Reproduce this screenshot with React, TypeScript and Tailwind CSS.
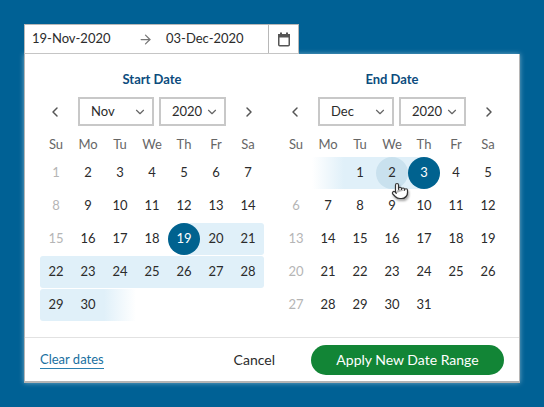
import { ArrowRight, ChevronDown, ChevronLeft, ChevronRight, Pointer } from "lucide-react";

const weekDays = ["Su", "Mo", "Tu", "We", "Th", "Fr", "Sa"];

type Cell = { day?: number; muted?: boolean; bg?: string; selected?: boolean; hover?: boolean; cursor?: boolean };

const band = "bg-[#e0f0f9]";

const range = (from: number, to: number): Cell[] => {
  const out: Cell[] = [];
  for (let d = from; d <= to; d++) out.push({ day: d });
  return out;
};

const startRows: Cell[][] = [
  [{ day: 1, muted: true }, ...range(2, 7)],
  [{ day: 8, muted: true }, ...range(9, 14)],
  [
    { day: 15, muted: true },
    ...range(16, 18),
    { day: 19, selected: true, bg: "bg-gradient-to-r from-transparent from-50% to-[#e0f0f9] to-50%" },
    { day: 20, bg: band },
    { day: 21, bg: `${band} rounded-r-[3px]` },
  ],
  range(22, 28).map((c, i) => ({
    ...c,
    bg: i === 0 ? `${band} rounded-l-[3px]` : i === 6 ? `${band} rounded-r-[3px]` : band,
  })),
  [
    { day: 29, bg: `${band} rounded-l-[3px]` },
    { day: 30, bg: band },
    { bg: "bg-gradient-to-r from-[#e0f0f9] to-white" },
  ],
];

const endRows: Cell[][] = [
  [
    {},
    { bg: "bg-gradient-to-r from-white to-[#e0f0f9]" },
    { day: 1, bg: band },
    { day: 2, bg: band, hover: true, cursor: true },
    { day: 3, selected: true, bg: "bg-gradient-to-r from-[#e0f0f9] from-50% to-transparent to-50%" },
    { day: 4 },
    { day: 5 },
  ],
  [{ day: 6, muted: true }, ...range(7, 12)],
  [{ day: 13, muted: true }, ...range(14, 19)],
  [{ day: 20, muted: true }, ...range(21, 26)],
  [{ day: 27, muted: true }, ...range(28, 31)],
];

function Day({ cell }: { cell: Cell }) {
  const text = cell.selected ? "text-white" : cell.muted ? "text-[#b5b5b5]" : "text-[#2b2b2b]";
  const circle = cell.selected ? "bg-[#00628f] rounded-full" : cell.hover ? "bg-[#c9e1ee] rounded-full" : "";
  return (
    <div className={`relative h-8 w-8 ${cell.bg ?? ""}`}>
      <div className={`flex h-8 w-8 items-center justify-center text-[13px] ${circle} ${text}`}>{cell.day}</div>
      {cell.cursor && (
        <Pointer
          size={18}
          strokeWidth={1.6}
          className="absolute left-[15px] top-[25px] z-10 fill-white text-[#333333] drop-shadow-[1px_2px_1px_rgba(0,0,0,0.35)]"
        />
      )}
    </div>
  );
}

function Select({ value, width }: { value: string; width: string }) {
  return (
    <div className={`flex h-[29px] items-center justify-between border-2 border-[#c8c8c8] pl-[11px] pr-[5px] text-[13px] text-[#2b2b2b] ${width}`}>
      <span>{value}</span>
      <ChevronDown size={14} strokeWidth={2} className="shrink-0 text-[#666666]" />
    </div>
  );
}

function Month({ title, month, rows }: { title: string; month: string; rows: Cell[][] }) {
  return (
    <div className="w-[224px]">
      <div className="text-center text-[13px] font-bold leading-5 text-[#0c4c7d]">{title}</div>
      <div className="mt-[8px] flex h-[29px] items-center justify-between px-[7px]">
        <ChevronLeft size={16} strokeWidth={2.2} className="text-[#555555]" />
        <div className="flex gap-[5px]">
          <Select value={month} width="w-[76px]" />
          <Select value="2020" width="w-[67px]" />
        </div>
        <ChevronRight size={16} strokeWidth={2.2} className="text-[#555555]" />
      </div>
      <div className="mt-[8px] grid h-[22px] grid-cols-7 items-center text-center text-[13px] text-[#666666]">
        {weekDays.map((d) => (
          <span key={d}>{d}</span>
        ))}
      </div>
      <div className="mt-[1px] flex flex-col gap-[1px]">
        {rows.map((row, r) => (
          <div key={r} className="flex">
            {row.map((cell, c) => (
              <Day key={c} cell={cell} />
            ))}
          </div>
        ))}
      </div>
    </div>
  );
}

export default function App() {
  return (
    <div className="h-[407px] w-[544px] overflow-hidden bg-[#006195] pl-6 pt-6 font-['Lato',sans-serif]">
      <div className="flex h-[30px] w-[275px] items-center border border-[#b8b8b8] bg-white text-[13px] text-[#2b2b2b]">
        <span className="ml-[7px] w-[106px]">19-Nov-2020</span>
        <ArrowRight size={15} strokeWidth={2} className="text-[#777777]" />
        <span className="ml-[13px] flex-1">03-Dec-2020</span>
        <div className="flex h-full w-[30px] items-center justify-center border-l border-[#b8b8b8]">
          <svg width="14" height="15" viewBox="0 0 14 15" className="text-[#555555]">
            <path d="M3 0.5h2v2H3zM9 0.5h2v2H9z" fill="currentColor" />
            <path d="M1 2h12v3.5H1z" fill="currentColor" />
            <rect x="1.75" y="2.75" width="10.5" height="11" rx="1" fill="none" stroke="currentColor" strokeWidth="1.5" />
          </svg>
        </div>
      </div>
      <div className="h-[329px] w-[496px] border-x border-b-2 border-[#b5b5b5] bg-white shadow-[0_0_5px_rgba(255,255,255,0.45)]">
        <div className="flex h-[283px] justify-between px-[15px] pt-[15px]">
          <Month title="Start Date" month="Nov" rows={startRows} />
          <Month title="End Date" month="Dec" rows={endRows} />
        </div>
        <div className="flex h-[44px] items-center justify-between border-t border-[#e2e2e2] px-[15px]">
          <a className="border-b border-[#2b7fae] text-[13px] leading-[18px] text-[#19709f]">Clear dates</a>
          <div className="flex items-center gap-[36px]">
            <span className="text-[14px] text-[#2b2b2b]">Cancel</span>
            <button className="flex h-[30px] w-[193px] items-center justify-center rounded-full bg-[#128536] text-[14px] text-white">
              Apply New Date Range
            </button>
          </div>
        </div>
      </div>
    </div>
  );
}
